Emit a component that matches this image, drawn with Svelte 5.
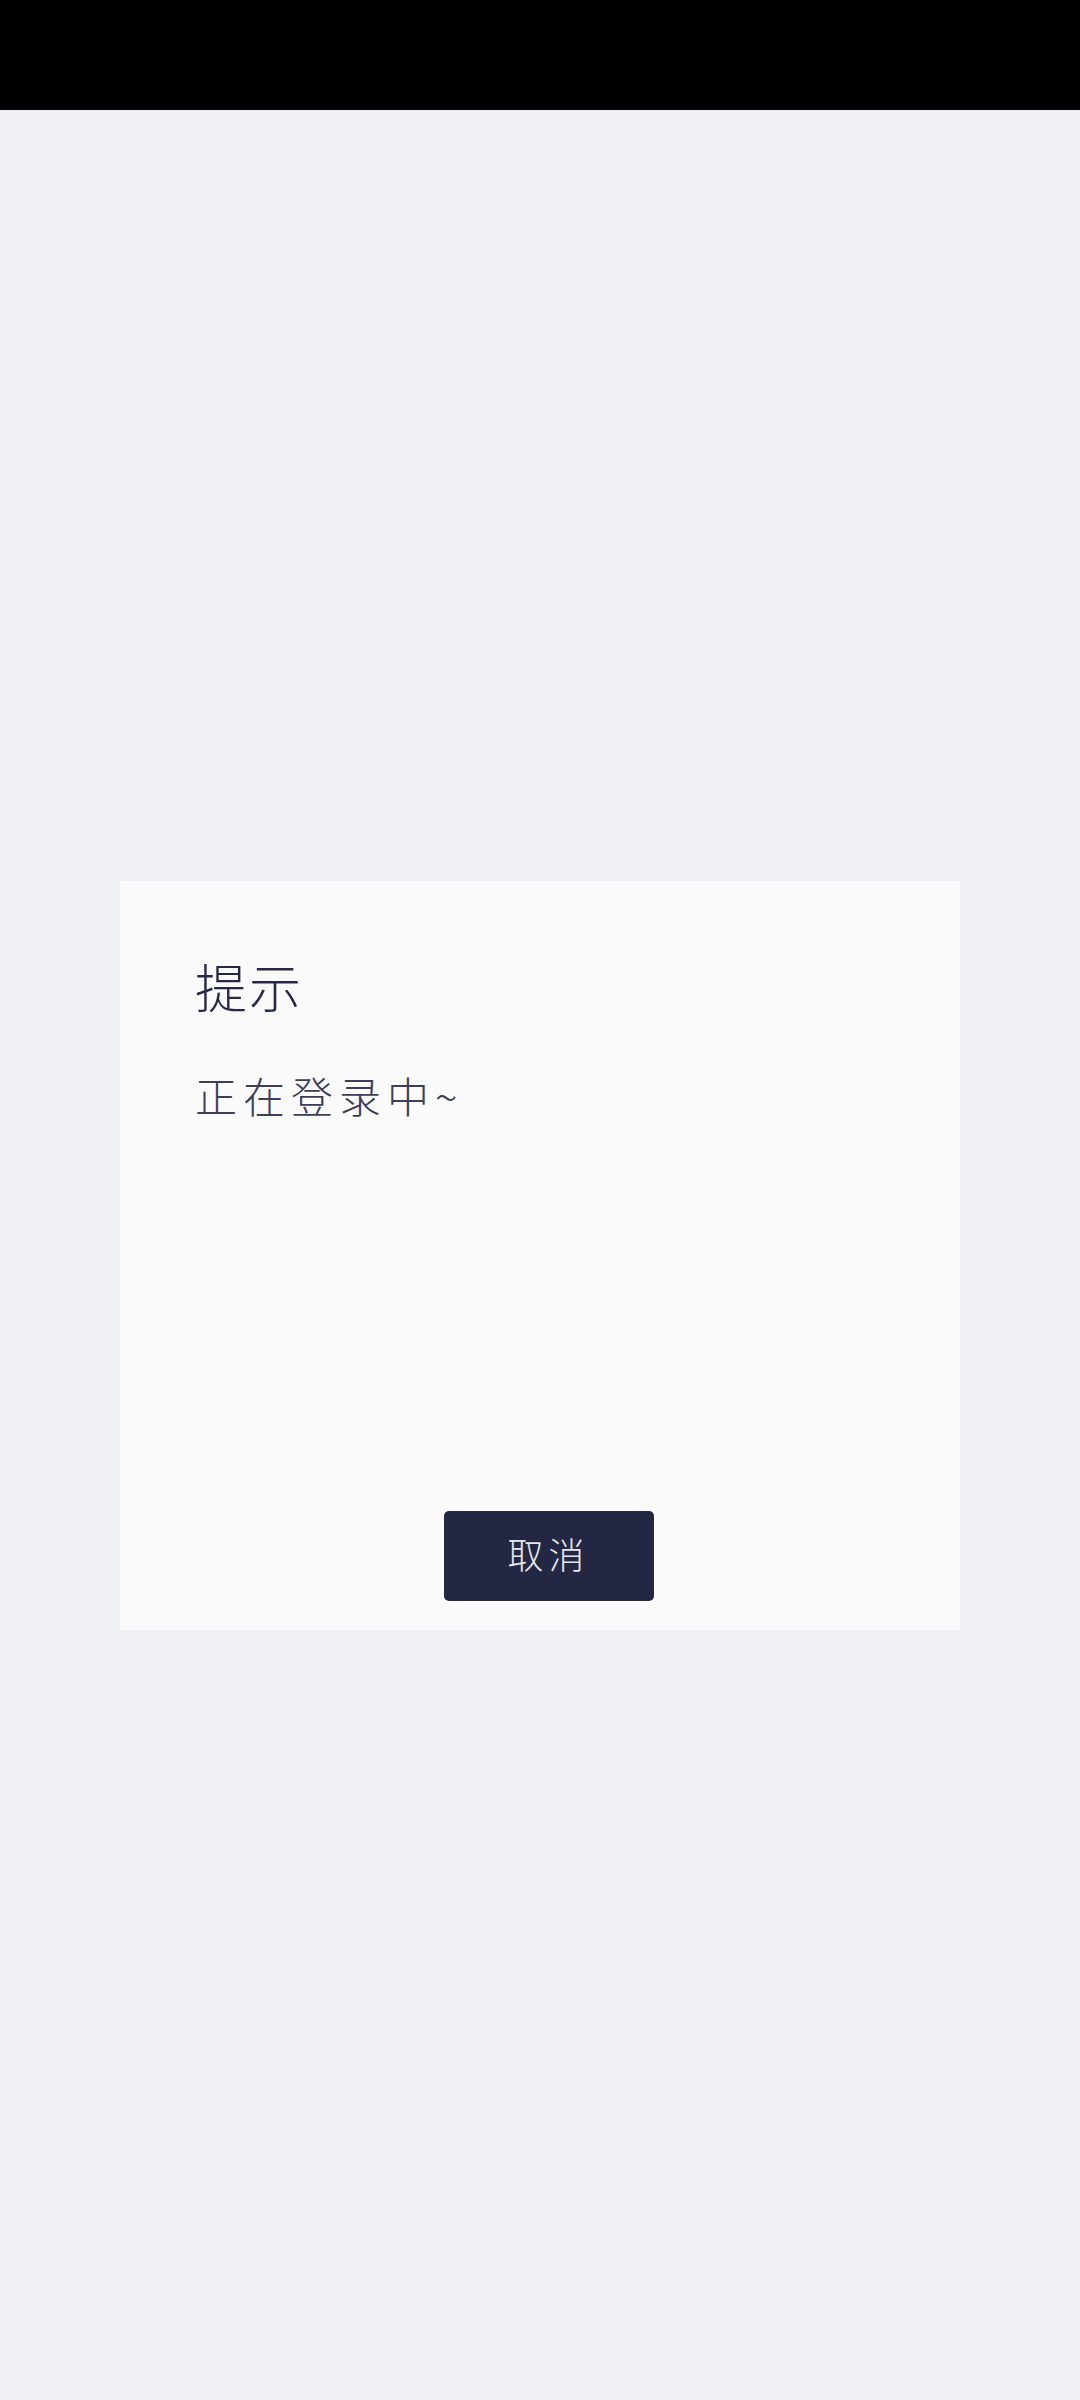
<script>
    let title = '提示'
    let message = '正在登录中~'
</script>

<div class="page">
    <div class="status-bar"></div>
    <main class="content">
        <section class="dialog">
            <h2 class="title">{title}</h2>
            <p class="message">{message}</p>
            <div class="actions">
                <button type="button" class="cancel">取消</button>
            </div>
        </section>
    </main>
</div>

<style>
:global(body) {
    margin: 0;
    background-color: #eef0f5;
}

.page {
    display: flex;
    flex-direction: column;
    height: 2400px;
    font-family: "Noto Sans CJK SC", "Noto Sans", sans-serif;
}

.status-bar {
    background-color: #000;
    height: 110px;
    flex-shrink: 0;
}

.content {
    flex: 1;
    padding: 771px 120px 0;
    background-color: #eef0f5;
}

.dialog {
    background-color: #fafafb;
    box-sizing: border-box;
    display: flex;
    flex-direction: column;
    height: 749px;
    padding: 71px 75px 29px;
}

.title {
    color: #26284a;
    font-size: 52px;
    font-weight: 300;
    letter-spacing: 2px;
    line-height: 68px;
    margin: 0;
}

.message {
    color: #3c3e5a;
    font-size: 42px;
    font-weight: 300;
    letter-spacing: 6px;
    line-height: 56px;
    margin: 47px 0 0;
}

.actions {
    display: flex;
    justify-content: center;
    margin-top: auto;
    padding-left: 17px;
}

.cancel {
    background-color: #242744;
    border: none;
    border-radius: 5px;
    color: #e6e6ea;
    font-family: inherit;
    font-size: 36px;
    font-weight: 300;
    height: 90px;
    letter-spacing: 5px;
    line-height: 84px;
    padding: 0 0 6px;
    width: 210px;
}
</style>
